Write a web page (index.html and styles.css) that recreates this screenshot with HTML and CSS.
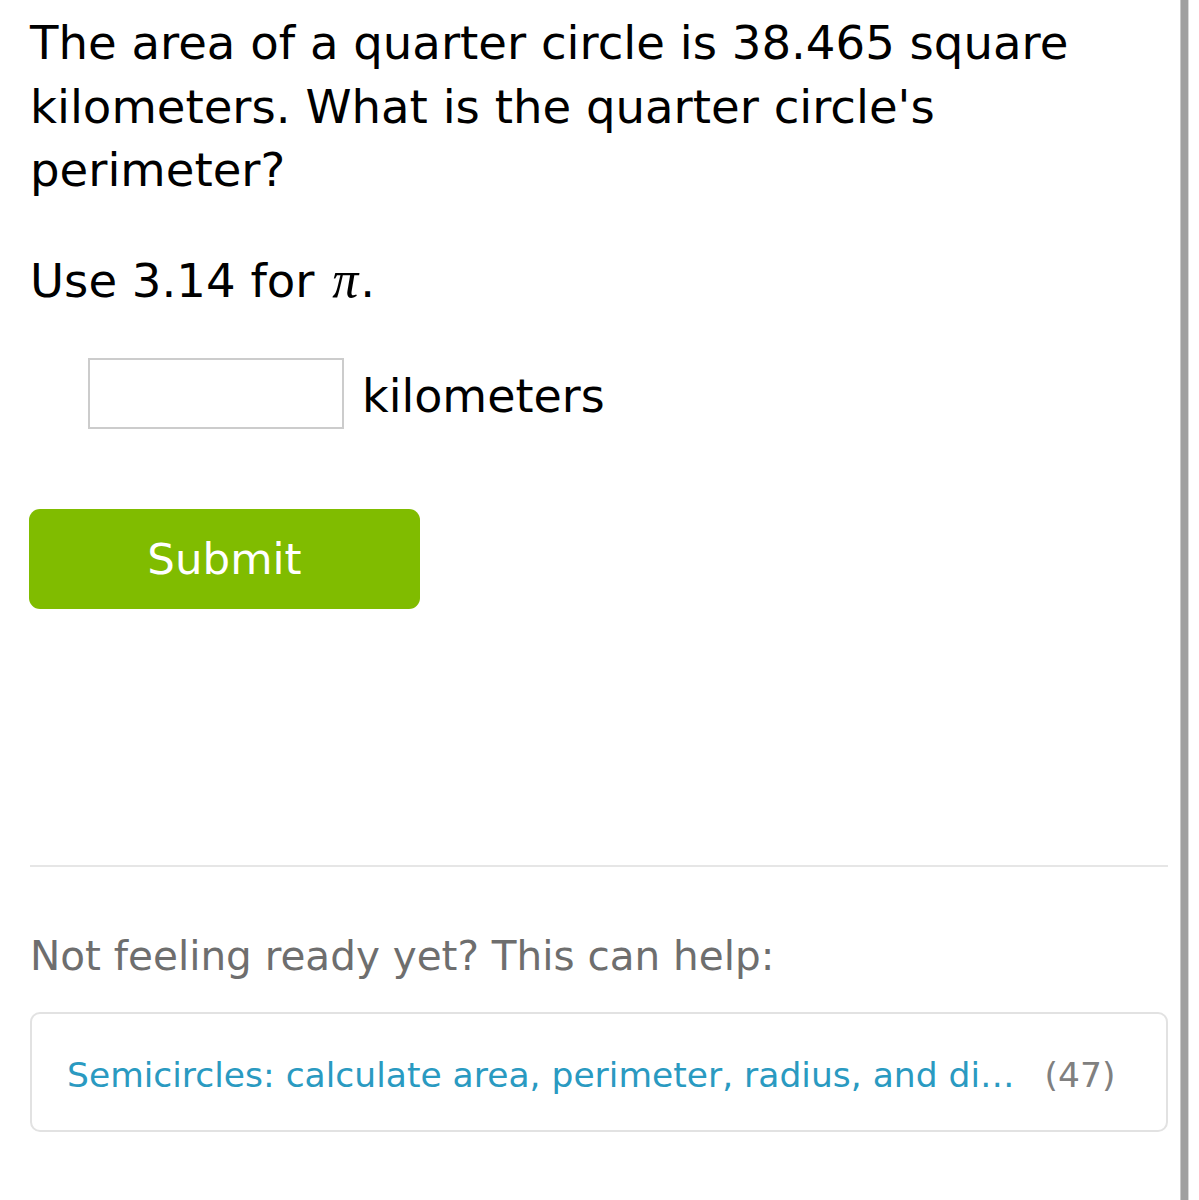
FILE: index.html
```html
<!DOCTYPE html>
<html lang="en">
<head>
<meta charset="utf-8">
<title>Quarter circle perimeter</title>
<link rel="stylesheet" href="styles.css">
</head>
<body>
<div class="page">
  <main class="content">
    <p class="question">The area of a quarter circle is 38.465 square kilometers. What is the quarter circle's perimeter?</p>
    <p class="hint">Use 3.14 for <span class="pi">π</span>.</p>
    <div class="answer-row">
      <span class="input-box"></span>
      <span class="unit">kilometers</span>
    </div>
    <button class="submit">Submit</button>
    <hr class="divider">
    <p class="help-title">Not feeling ready yet? This can help:</p>
    <div class="help-card">
      <a class="skill-link">Semicircles: calculate area, perimeter, radius, and di…</a>
      <span class="count">(47)</span>
    </div>
  </main>
  <div class="scrollbar"></div>
</div>
</body>
</html>
```
FILE: styles.css
```css
html, body {
  margin: 0;
  padding: 0;
  background: #ffffff;
}

body {
  font-family: "DejaVu Sans", Verdana, sans-serif;
  color: #000000;
}

.page {
  display: flex;
  min-height: 1200px;
}

.content {
  flex: 1;
  padding: 12px 12px 0 30px;
}

.question {
  margin: 0;
  font-size: 46.6px;
  line-height: 63.5px;
}

.hint {
  margin: 47px 0 0;
  font-size: 46.6px;
  line-height: 63.5px;
}

.pi {
  font-family: "Liberation Serif", "DejaVu Serif", serif;
  font-style: italic;
  font-size: 52px;
  line-height: 1;
  margin-left: 3px;
  margin-right: 2px;
}

.answer-row {
  display: flex;
  align-items: center;
  margin: 45px 0 0 58px;
}

.input-box {
  display: block;
  width: 252px;
  height: 67px;
  border: 2px solid #cccccc;
  background: #ffffff;
}

.unit {
  margin-left: 18px;
  padding-top: 6px;
  font-size: 46px;
  line-height: 63.5px;
}

.submit {
  display: flex;
  align-items: center;
  justify-content: center;
  margin-top: 80px;
  margin-left: -1px;
  width: 391px;
  height: 100px;
  padding: 0;
  border: none;
  border-radius: 11px;
  background: #80bc00;
  color: #ffffff;
  font-family: "DejaVu Sans", Verdana, sans-serif;
  font-size: 43.5px;
}

.divider {
  margin: 256px 0 0;
  border: none;
  height: 2px;
  background: #e6e6e6;
}

.help-title {
  margin: 61px 0 0;
  font-size: 40.5px;
  line-height: 56px;
  color: #6e6e6e;
}

.help-card {
  display: flex;
  align-items: baseline;
  margin-top: 28px;
  box-sizing: border-box;
  height: 120px;
  padding: 37px 35px 0;
  border: 2px solid #e2e2e2;
  border-radius: 10px;
  font-size: 34.5px;
  line-height: 49px;
}

.skill-link {
  color: #2a9ac1;
}

.count {
  margin-left: 30px;
  color: #808080;
}

.scrollbar {
  width: 7px;
  margin-right: 10px;
  background: #a0a0a0;
  border-left: 1px solid #c8c8c8;
  border-right: 1px solid #d8d8d8;
}
```
